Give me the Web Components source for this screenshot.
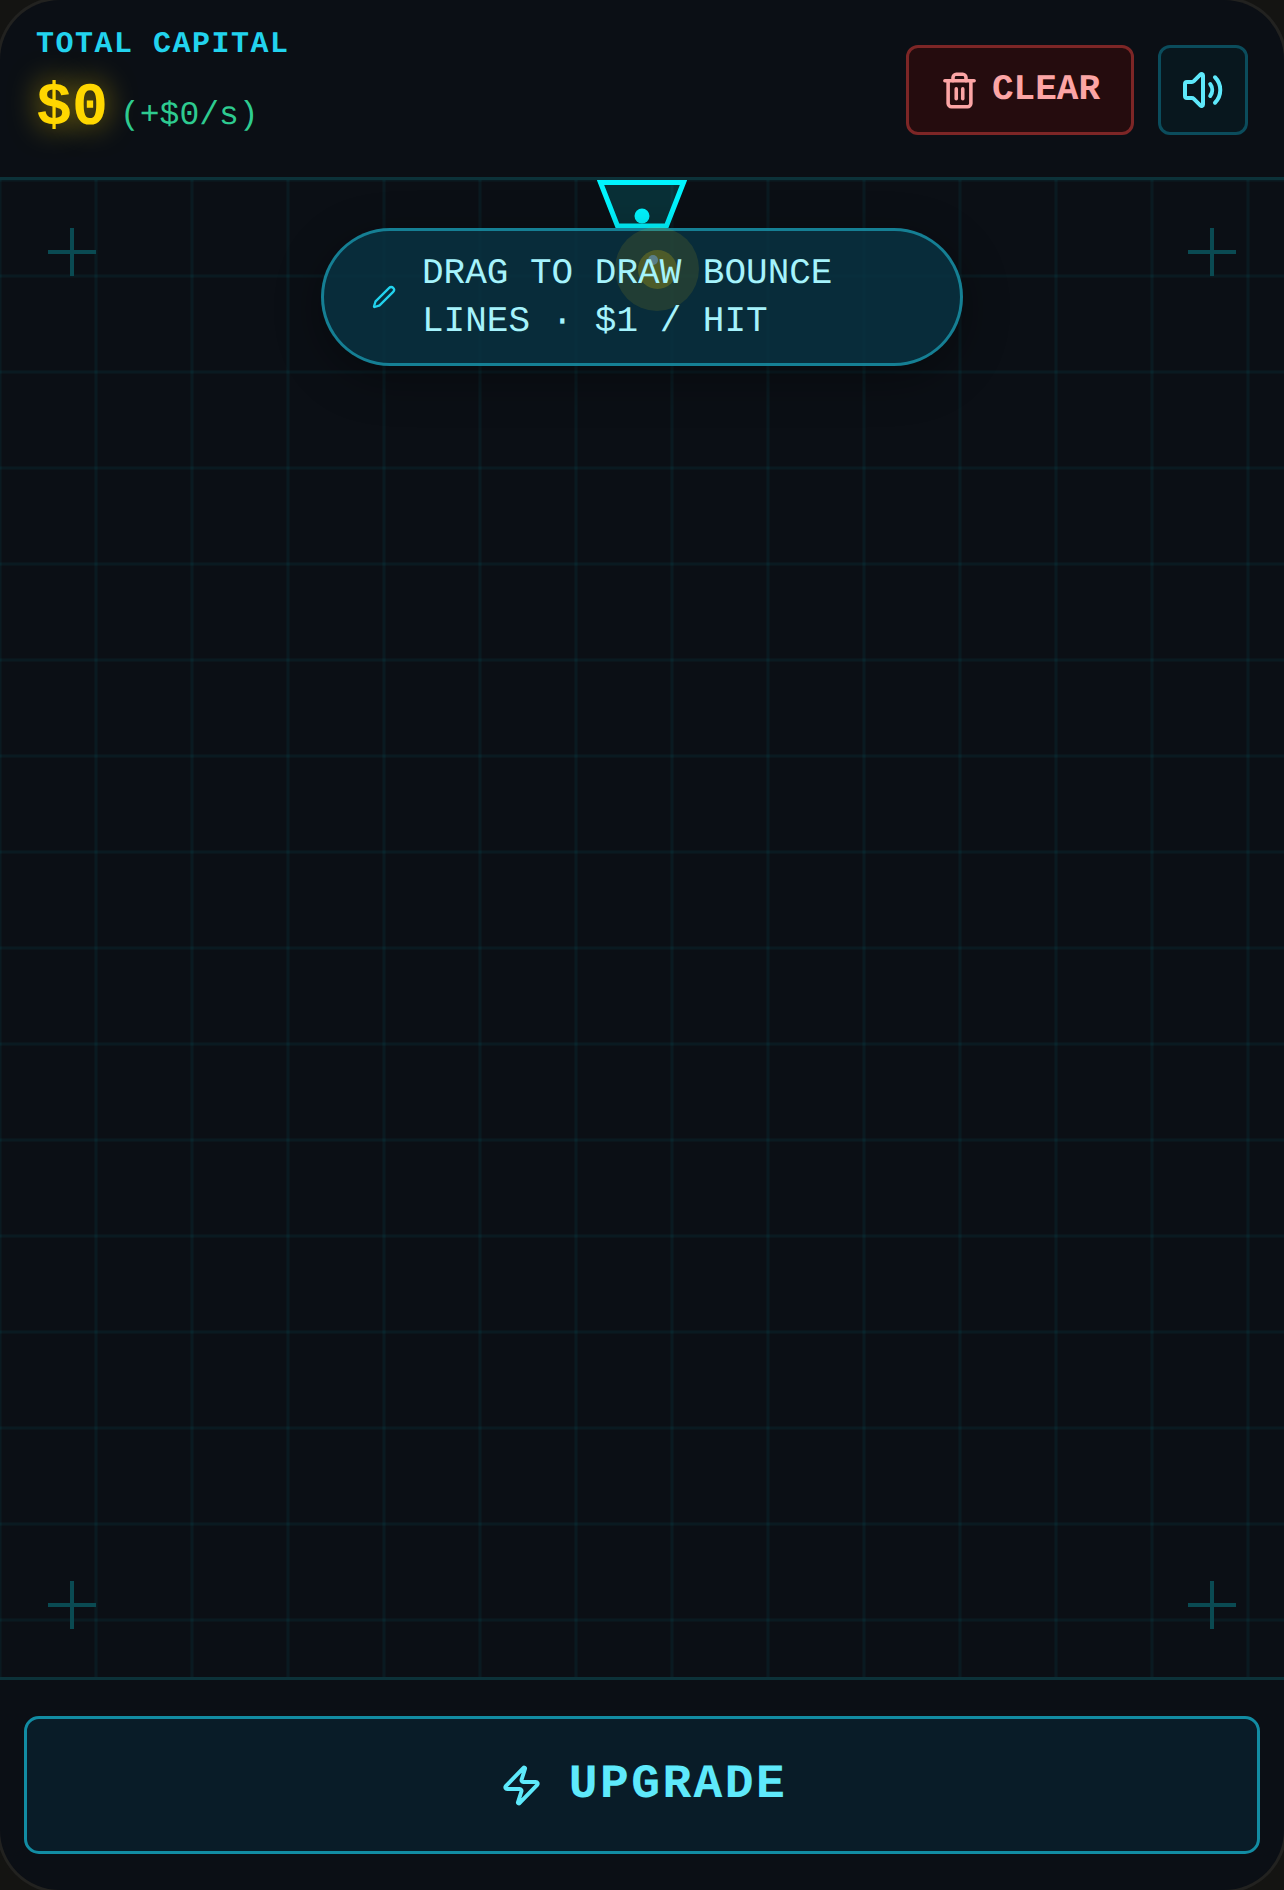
<!DOCTYPE html>
<html lang="en">
<head>
<meta charset="utf-8">
<title>Bounce Lines</title>
<style>
  html, body { margin: 0; padding: 0; background: #141412; }
  body { font-family: "Liberation Mono", monospace; text-rendering: geometricPrecision; }
</style>
</head>
<body>
<game-shell>
  <top-bar slot="top">
    <capital-readout label="TOTAL CAPITAL" amount="$0" rate="(+$0/s)"></capital-readout>
    <neon-button tone="red" wide>
      <svg slot="icon" width="39" height="39" viewBox="0 0 24 24" fill="none" stroke="currentColor" stroke-width="2.2" stroke-linecap="round" stroke-linejoin="round"><path d="M10 11v6"/><path d="M14 11v6"/><path d="M19 6v14c0 1-1 2-2 2H7c-1 0-2-1-2-2V6"/><path d="M3 6h18"/><path d="M8 6V4c0-1 1-2 2-2h4c1 0 2 1 2 2v2"/></svg>
      CLEAR
    </neon-button>
    <neon-button tone="cyan">
      <svg slot="icon" width="40" height="48" viewBox="1 0 20 24" fill="none" stroke="currentColor" stroke-width="2" stroke-linecap="round" stroke-linejoin="round"><path d="M11 4.702a.705.705 0 0 0-1.203-.498L6.413 7.587A1.4 1.4 0 0 1 5.416 8H3a1 1 0 0 0-1 1v6a1 1 0 0 0 1 1h2.416a1.4 1.4 0 0 1 .997.413l3.383 3.384A.705.705 0 0 0 11 19.298z"/><path d="M14.6 9a5 5 0 0 1 0 6"/><path d="M17 5.64a9 9 0 0 1 0 12.72"/></svg>
    </neon-button>
  </top-bar>
  <play-field slot="field">
    <hint-pill>
      <svg slot="icon" width="24" height="24" viewBox="0 0 24 24" fill="none" stroke="currentColor" stroke-width="2.3" stroke-linecap="round" stroke-linejoin="round"><path d="M21.174 6.812a1 1 0 0 0-3.986-3.987L3.842 16.174a2 2 0 0 0-.5.83l-1.321 4.352a.5.5 0 0 0 .623.622l4.353-1.32a2 2 0 0 0 .83-.497z"/></svg>
      <hit-burst slot="burst"></hit-burst>
      DRAG TO DRAW BOUNCE LINES · $1 / HIT
    </hint-pill>
  </play-field>
  <upgrade-bar slot="bottom">
    <svg slot="icon" width="43" height="43" viewBox="0 0 24 24" fill="none" stroke="currentColor" stroke-width="2.2" stroke-linecap="round" stroke-linejoin="round"><path d="M4 14a1 1 0 0 1-.78-1.63l9.9-10.2a.5.5 0 0 1 .86.46l-1.92 6.02A1 1 0 0 0 13 10h7a1 1 0 0 1 .78 1.63l-9.9 10.2a.5.5 0 0 1-.86-.46l1.92-6.02A1 1 0 0 0 11 14z"/></svg>
    UPGRADE
  </upgrade-bar>
</game-shell>

<script>
// little helper, every element here is just a template in an open shadow root
function define(name, html, extra = {}) {
  const tpl = document.createElement("template");
  tpl.innerHTML = html;
  class El extends HTMLElement {
    constructor() {
      super();
      this.attachShadow({ mode: "open" }).appendChild(tpl.content.cloneNode(true));
    }
    connectedCallback() {
      if (extra.ready) extra.ready.call(this);
    }
  }
  customElements.define(name, El);
}

define("game-shell", `
  <style>
    :host {
      display: flex;
      flex-direction: column;
      width: 1284px;
      height: 1890px;
      background: #0b0f15;
      border-radius: 60px;
      box-shadow: 0 0 0 3px #222220;
      overflow: hidden;
      color: #fff;
    }
    .field { flex: 1; display: flex; min-height: 0; }
  </style>
  <slot name="top"></slot>
  <div class="field"><slot name="field"></slot></div>
  <slot name="bottom"></slot>
`);

define("top-bar", `
  <style>
    :host {
      display: flex;
      align-items: center;
      gap: 24px;
      height: 180px;
      box-sizing: border-box;
      padding: 24px 36px 21px;
      border-bottom: 3px solid #0c3239;
    }
    ::slotted(capital-readout) { margin-right: auto; align-self: flex-start; margin-top: 1px; }
  </style>
  <slot></slot>
`);

define("capital-readout", `
  <style>
    :host { display: block; }
    .label {
      font-size: 30px;
      line-height: 40px;
      font-weight: 700;
      letter-spacing: 1.5px;
      color: #22d3ee;
    }
    .row { display: flex; align-items: baseline; gap: 12px; line-height: 88px; }
    .amount {
      font-size: 60px;
      font-weight: 700;
      color: #ffd700;
      text-shadow: 0 0 30px rgba(255, 215, 0, .6);
    }
    .rate { font-size: 33px; color: #2ecb90; }
  </style>
  <div class="label"></div>
  <div class="row"><span class="amount"></span><span class="rate"></span></div>
`, {
  ready() {
    const root = this.shadowRoot;
    root.querySelector(".label").textContent = this.getAttribute("label");
    root.querySelector(".amount").textContent = this.getAttribute("amount");
    root.querySelector(".rate").textContent = this.getAttribute("rate");
  }
});

define("neon-button", `
  <style>
    :host {
      display: flex;
      align-items: center;
      justify-content: center;
      width: 90px;
      height: 90px;
      box-sizing: border-box;
      border-radius: 12px;
      border: 3px solid #0b4c5c;
      background: #08171e;
      color: #5ee9fb;
      font-size: 36px;
      font-weight: 700;
    }
    :host([wide]) { width: 228px; gap: 13px; }
    :host([tone="red"]) {
      background: #250c0e;
      border-color: #7d2626;
      color: #fca5a5;
    }
    ::slotted(svg) { display: block; }
    .text { padding-bottom: 2px; }
  </style>
  <slot name="icon"></slot><span class="text"><slot></slot></span>
`);

define("play-field", `
  <style>
    :host {
      display: block;
      position: relative;
      flex: 1;
      background-image:
        linear-gradient(rgba(0, 240, 255, .05) 3px, transparent 3px),
        linear-gradient(90deg, rgba(0, 240, 255, .05) 3px, transparent 3px);
      background-size: 96px 96px;
      background-position: -1.5px -1.5px;
      border-bottom: 3px solid #0c3239;
    }
    corner-mark { position: absolute; }
    .tl { left: 48px; top: 48px; }
    .tr { right: 48px; top: 48px; }
    .bl { left: 48px; bottom: 48px; }
    .br { right: 48px; bottom: 48px; }
    ball-dropper { position: absolute; left: 597px; top: 0; }
    ::slotted(hint-pill) { position: absolute; left: 321px; top: 48px; }
  </style>
  <corner-mark class="tl"></corner-mark>
  <corner-mark class="tr"></corner-mark>
  <corner-mark class="bl"></corner-mark>
  <corner-mark class="br"></corner-mark>
  <ball-dropper></ball-dropper>
  <slot></slot>
`);

define("corner-mark", `
  <style>
    :host {
      display: block;
      width: 48px;
      height: 48px;
      background:
        linear-gradient(#0a4a52, #0a4a52) center / 4px 48px no-repeat,
        linear-gradient(#0a4a52, #0a4a52) center / 48px 4px no-repeat;
    }
  </style>
`);

define("ball-dropper", `
  <style>
    :host { display: block; width: 90px; height: 48px; }
    svg { display: block; }
  </style>
  <svg width="90" height="48" viewBox="0 0 90 48">
    <polygon points="3.5,2.5 86.5,2.5 69.5,46 20.5,46" fill="rgba(0,240,255,.15)" stroke="#00f5ff" stroke-width="5"/>
    <circle cx="45" cy="36" r="7.5" fill="#00f5ff"/>
  </svg>
`);

define("hint-pill", `
  <style>
    :host {
      display: flex;
      align-items: center;
      gap: 26px;
      width: 642px;
      height: 138px;
      box-sizing: border-box;
      padding: 18px 46px 18px 48px;
      border: 3px solid rgba(34, 211, 238, .5);
      border-radius: 69px;
      background: rgba(8, 51, 68, .8);
      box-shadow: 0 12px 45px rgba(0, 0, 0, .35);
      color: #a5f3fc;
      font-size: 36px;
      line-height: 48px;
    }
    .icon { color: #22d3ee; flex: none; display: flex; }
    .text { position: relative; z-index: 1; padding-top: 2px; }
    ::slotted(hit-burst) { position: absolute; left: 333px; top: 38px; }
  </style>
  <slot name="burst"></slot>
  <span class="icon"><slot name="icon"></slot></span>
  <span class="text"><slot></slot></span>
`);

define("hit-burst", `
  <style>
    :host {
      display: block;
      width: 0;
      height: 0;
    }
    div { position: absolute; border-radius: 50%; }
    .outer { left: -42px; top: -42px; width: 84px; height: 84px; background: rgba(255, 215, 0, .1); }
    .inner { left: -19.5px; top: -19.5px; width: 39px; height: 39px; background: rgba(255, 215, 0, .2); }
    .ball { left: -9px; top: -14px; width: 10px; height: 10px; background: rgba(100, 150, 200, .6); }
  </style>
  <div class="outer"></div>
  <div class="inner"></div>
  <div class="ball"></div>
`);

define("upgrade-bar", `
  <style>
    :host {
      display: block;
      padding: 36px 24px;
    }
    .btn {
      display: flex;
      align-items: center;
      justify-content: center;
      gap: 26px;
      height: 138px;
      box-sizing: border-box;
      padding-left: 3px;
      border: 3px solid #128ca3;
      border-radius: 15px;
      background: #091c28;
      color: #5ee9fb;
      font-size: 48px;
      font-weight: 700;
      letter-spacing: 2.4px;
    }
    ::slotted(svg) { display: block; }
  </style>
  <div class="btn"><slot name="icon"></slot><span><slot></slot></span></div>
`);
</script>
</body>
</html>
